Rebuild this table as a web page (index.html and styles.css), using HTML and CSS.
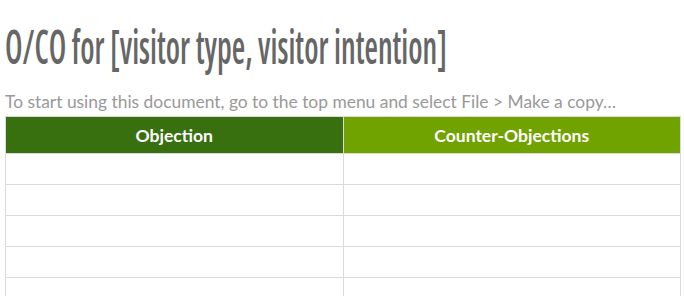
FILE: index.html
```html
<!DOCTYPE html>
<html lang="en">
<head>
    <meta charset="UTF-8">
    <meta name="viewport" content="width=device-width, initial-scale=1.0">
    <title>O/CO</title>
    <link rel="stylesheet" href="styles.css">
</head>
<body>
    <div class="page">
        <h1 class="title"><span>O/CO for [visitor type, visitor intention]</span></h1>
        <p class="intro">To start using this document, go to the top menu and select File &gt; Make a copy&hellip;</p>
        <table class="oco">
            <thead>
                <tr>
                    <th class="objection">Objection</th>
                    <th class="counter">Counter-Objections</th>
                </tr>
            </thead>
            <tbody>
                <tr><td></td><td></td></tr>
                <tr><td></td><td></td></tr>
                <tr><td></td><td></td></tr>
                <tr><td></td><td></td></tr>
                <tr><td></td><td></td></tr>
            </tbody>
        </table>
    </div>
</body>
</html>
```

FILE: styles.css
```css
body {
    margin: 0;
    background: #fff;
}
.page {
    padding: 18px 3px 0 5px;
}
.title {
    margin: 0;
    font-family: "Open Sans", sans-serif;
    font-stretch: 75%;
    font-weight: 600;
    font-size: 46px;
    line-height: 56px;
    color: #666;
    white-space: nowrap;
}
/* the heading face is narrower than any condensed cut we have */
.title span {
    display: inline-block;
    transform: scaleX(0.67);
    transform-origin: left center;
}
.intro {
    margin: 18px 0 4px;
    font-family: Lato, sans-serif;
    font-size: 17.4px;
    line-height: 20px;
    color: #999;
}
.oco {
    width: 676px;
    border-collapse: collapse;
    table-layout: fixed;
}
.oco th,
.oco td {
    border: 1px solid #dadada;
    padding: 0;
}
.oco th {
    height: 36px;
    font-family: Lato, sans-serif;
    font-size: 17.5px;
    font-weight: bold;
    color: #fff;
}
.oco td {
    height: 30px;
}
.objection {
    background: #38700f;
}
.counter {
    background: #71a300;
}
```
